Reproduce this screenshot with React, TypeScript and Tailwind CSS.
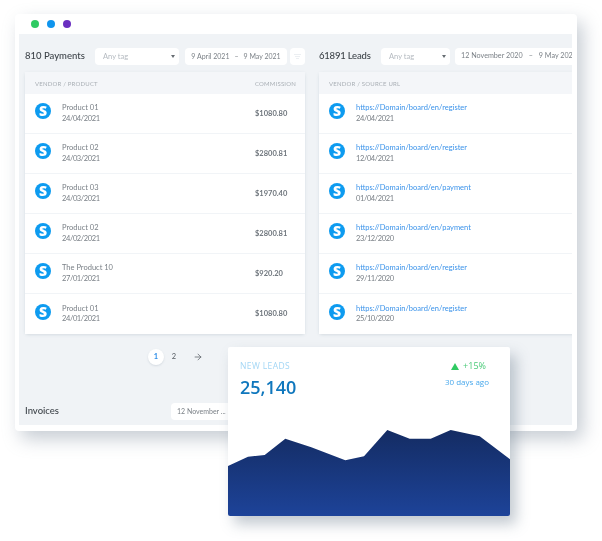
import { ArrowRight } from "lucide-react";

const payments = [
  { name: "Product 01", date: "24/04/2021", amount: "$1080.80" },
  { name: "Product 02", date: "24/03/2021", amount: "$2800.81" },
  { name: "Product 03", date: "24/03/2021", amount: "$1970.40" },
  { name: "Product 02", date: "24/02/2021", amount: "$2800.81" },
  { name: "The Product 10", date: "27/01/2021", amount: "$920.20" },
  { name: "Product 01", date: "24/01/2021", amount: "$1080.80" },
];

const leads = [
  { url: "https://Domain/board/en/register", date: "24/04/2021" },
  { url: "https://Domain/board/en/register", date: "12/04/2021" },
  { url: "https://Domain/board/en/payment", date: "01/04/2021" },
  { url: "https://Domain/board/en/payment", date: "23/12/2020" },
  { url: "https://Domain/board/en/register", date: "29/11/2020" },
  { url: "https://Domain/board/en/register", date: "25/10/2020" },
];

function VendorIcon() {
  return (
    <span className="mb-[5px] flex h-4 w-4 shrink-0 items-center justify-center rounded-full bg-[#0d9bf0] text-[14px] leading-none font-extrabold text-white font-['Open_Sans',sans-serif]">
      S
    </span>
  );
}

function TagSelect({ width }: { width: string }) {
  return (
    <div className={`flex h-[17px] shrink-0 items-center justify-between rounded-sm bg-white pl-2 pr-1 text-[7.5px] text-[#b4bac0] ${width}`}>
      <span>Any tag</span>
      <span className="h-0 w-0 border-x-[2.5px] border-t-[3px] border-x-transparent border-t-[#666c72]" />
    </div>
  );
}

function Row({ children, right }: { children: React.ReactNode; right?: string }) {
  return (
    <div className="flex h-10 items-center justify-between border-b border-[#f1f4f7] bg-white pl-[10px] pr-[19px] last:border-b-0">
      <div className="flex items-center gap-[11px]">
        <VendorIcon />
        <div className="text-[7.5px] leading-[10.5px] text-[#7a8087]">{children}</div>
      </div>
      {right && <span className="w-[31px] text-[7.5px] font-bold whitespace-nowrap text-[#6f767d]">{right}</span>}
    </div>
  );
}

export default function App() {
  return (
    <div className="relative h-[541px] w-[602px] overflow-hidden bg-white pl-[15px] pt-[14px] font-['Lato',sans-serif] blur-[0.3px]">
      <div className="h-[417px] w-[562px] rounded-sm bg-white shadow-[6px_8px_18px_rgba(130,145,160,0.45)]">
        <div className="flex h-5 items-center gap-2 pl-4">
          <span className="h-2 w-2 rounded-full bg-[#2fca62]" />
          <span className="h-2 w-2 rounded-full bg-[#0f95ee]" />
          <span className="h-2 w-2 rounded-full bg-[#6a2fc0]" />
        </div>

        <div className="ml-1 flex h-[391px] w-[553px] flex-col overflow-hidden bg-[#f0f3f6] pl-[6px] pt-[14px]">
          <div className="flex gap-[14px]">
            <section className="w-[280px] shrink-0">
              <div className="flex h-[17px] items-center">
                <h2 className="w-[70px] text-[9.5px] font-medium whitespace-nowrap text-[#3d4349]">810 Payments</h2>
                <TagSelect width="w-[84px]" />
                <div className="ml-[6px] flex h-[17px] w-[102px] shrink-0 items-center justify-center gap-[5px] rounded-sm bg-white text-[7px] text-[#7c8288]">
                  <span>9 April 2021</span>
                  <span>–</span>
                  <span>9 May 2021</span>
                </div>
                <div className="ml-[3px] flex h-[17px] w-[15px] shrink-0 flex-col items-center justify-center gap-[1px] rounded-sm bg-white">
                  <span className="h-px w-[7px] bg-[#eceff2]" />
                  <span className="h-px w-[5px] bg-[#eceff2]" />
                  <span className="h-px w-[3px] bg-[#eceff2]" />
                </div>
              </div>
              <div className="mt-[7px] rounded-sm shadow-[0_1px_3px_rgba(150,165,180,0.3)]">
                <div className="flex h-[22px] items-center justify-between bg-[#f4f6f9] pl-[10px] pr-[9px] text-[6px] tracking-[0.2px] text-[#a9afb5]">
                  <span>VENDOR / PRODUCT</span>
                  <span>COMMISSION</span>
                </div>
                {payments.map((p, i) => (
                  <Row key={i} right={p.amount}>
                    <div>{p.name}</div>
                    <div className="tracking-[-0.4px]">{p.date}</div>
                  </Row>
                ))}
              </div>
            </section>

            <section className="w-[270px] shrink-0">
              <div className="flex h-[17px] items-center">
                <h2 className="w-[62px] text-[9.5px] font-medium whitespace-nowrap tracking-[-0.2px] text-[#3d4349]">61891 Leads</h2>
                <TagSelect width="w-[69px]" />
                <div className="ml-[5px] flex h-[17px] w-[130px] shrink-0 items-center gap-[6px] overflow-hidden rounded-sm bg-white pl-[6px] text-[7.2px] whitespace-nowrap text-[#7c8288]">
                  <span>12 November 2020</span>
                  <span>–</span>
                  <span>9 May 2021</span>
                </div>
              </div>
              <div className="mt-[7px] rounded-sm shadow-[0_1px_3px_rgba(150,165,180,0.3)]">
                <div className="flex h-[22px] items-center bg-[#f4f6f9] pl-[10px] text-[6px] tracking-[0.2px] text-[#a9afb5]">
                  VENDOR / SOURCE URL
                </div>
                {leads.map((l, i) => (
                  <Row key={i}>
                    <div className="text-[#3b93ea]">{l.url}</div>
                    <div className="tracking-[-0.4px]">{l.date}</div>
                  </Row>
                ))}
              </div>
            </section>
          </div>

          <div className="mt-[15px] flex h-[16px] items-center pl-[123px] text-[7.5px] text-[#555b62]">
            <span className="flex h-4 w-4 items-center justify-center rounded-full bg-white font-bold text-[#2f8fe8] shadow-[0_1px_2px_rgba(150,165,180,0.3)]">1</span>
            <span className="ml-[8px] flex h-4 w-[4px] items-center justify-center">2</span>
            <ArrowRight className="ml-[17px] h-[10px] w-[10px] text-[#555b62]" strokeWidth={1.75} />
          </div>

          <div className="mt-[38px] flex h-[17px] items-center">
            <h2 className="w-[146px] text-[9.5px] font-medium text-[#3d4349]">Invoices</h2>
            <div className="flex h-[17px] w-[70px] items-center rounded-sm bg-white pl-[6px] text-[7px] whitespace-nowrap text-[#7c8288]">12 November ...</div>
          </div>
        </div>
      </div>

      <div className="absolute left-[228px] top-[347px] flex h-[169px] w-[282px] flex-col overflow-hidden rounded-[2px] bg-white shadow-[6px_8px_14px_rgba(120,135,150,0.45)]">
        <div className="flex h-[83px] justify-between pl-3 pr-[21px] pt-[13px] font-['Open_Sans',sans-serif]">
          <div>
            <div className="text-[8.5px] leading-[12px] tracking-[0.4px] text-[#a3d6f5]">NEW LEADS</div>
            <div className="mt-[3px] text-[18px] leading-[24px] font-semibold text-[#0f77bd]">25,140</div>
          </div>
          <div className="flex flex-col items-end">
            <div className="mr-[3px] flex items-center gap-[4px] text-[9px] leading-[12px] text-[#4ccb7a]">
              <span className="h-0 w-0 border-x-[4.5px] border-b-[7px] border-x-transparent border-b-[#2fca62]" />
              +15%
            </div>
            <div className="mt-[4px] text-[8px] leading-[12px] text-[#4aa9ec]">30 days ago</div>
          </div>
        </div>
        <svg className="block h-[86px] w-[282px]" viewBox="0 0 282 86">
          <defs>
            <linearGradient id="area" x1="0" y1="0" x2="0" y2="1">
              <stop offset="0" stopColor="#142c63" />
              <stop offset="1" stopColor="#1d4399" />
            </linearGradient>
          </defs>
          <path
            d="M0 36L20 26.7L36.7 25L57.3 8.7L83.3 17.3L117.3 30.3L136 26.3L159.3 0L181.7 8.7L202.7 8.7L222.7 0L251.7 6.3L282 29.3V86H0Z"
            fill="url(#area)"
          />
        </svg>
      </div>
    </div>
  );
}
